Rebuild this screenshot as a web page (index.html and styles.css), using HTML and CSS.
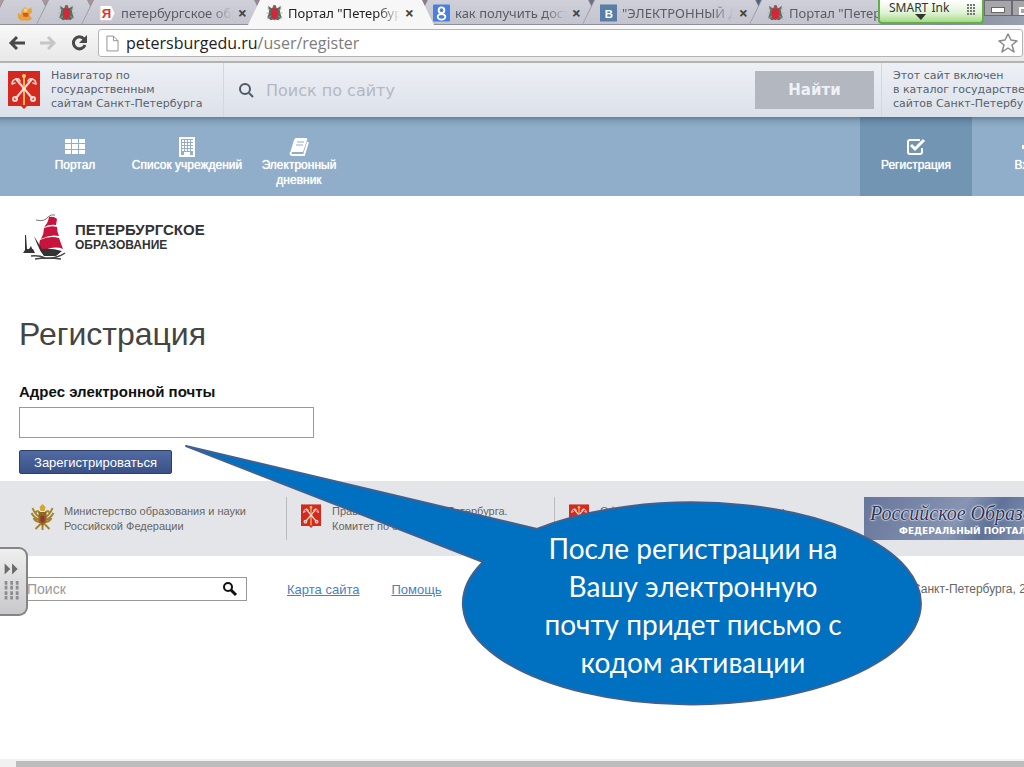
FILE: index.html
```html
<!DOCTYPE html>
<html lang="ru">
<head>
<meta charset="utf-8">
<title>Портал "Петербургское образование"</title>
<link rel="stylesheet" href="styles.css">
</head>
<body>
<svg class="defs" aria-hidden="true">
  <symbol id="crest" viewBox="0 0 32 38">
    <path fill="#d5291f" d="M0 0h32v35H19l-3 3-3-3H0z"/>
    <g fill="none" stroke="#f3d9d2" stroke-width="2" stroke-linecap="round">
      <path d="M8 8 24 27M24 8 8 27"/>
      <path stroke-width="1.500" d="M4 13q0-4 4-5 3-1 4 2M28 13q0-4-4-5-3-1-4 2M4 13l3-1M28 13l-3-1"/>
      <circle cx="7" cy="28" r="2"/><circle cx="25" cy="28" r="2"/>
    </g>
    <path stroke="#f2b655" stroke-width="2" d="M16 6v28"/>
    <circle cx="16" cy="5" r="2" fill="#f5cf6a"/><circle cx="16" cy="18" r="2" fill="#f6e4d8"/>
  </symbol>
  <symbol id="arms" viewBox="0 0 18 20">
    <path fill="#56705c" d="M2 2l4 3 3-4 3 4 4-3-1 7 2 6-4 3-4-1-4 1-4-3 2-6z"/>
    <path fill="#d3263a" d="M5 5h8v9l-4 4-4-4z"/>
    <path stroke="#9aa" stroke-width="1" d="M1 4l3 3M17 4l-3 3M1 17l4-4M17 17l-4-4M0 10h3M18 10h-3"/>
    <circle cx="9" cy="3" r="2" fill="#8b5a53"/>
  </symbol>
</svg>
<div class="screen">
  <div class="tabs">
    <div class="tab tab-small"><svg class="fav" viewBox="0 0 18 18"><path fill="#e8a23c" d="M1 9l3 2 1-5 3-3 4 2 3-2 1 5-3 3 3 4-3 2H4l-3-3z"/><path fill="#d9532f" d="M6 9h6v4H7z"/><circle cx="9" cy="6" r="2" fill="#f4d27a"/></svg></div>
    <div class="tab tab-small"><svg class="fav" viewBox="0 0 18 20"><use href="#arms"/></svg></div>
    <div class="tab"><svg class="fav" viewBox="0 0 18 18"><path fill="#fff" stroke="#d9c9c6" d="M1 1h12l4 8-4 8H1z"/><text x="3" y="14" class="ya">Я</text></svg><span class="tab-title">петербургское обр</span><button class="close" aria-label="Закрыть">×</button></div>
    <div class="tab tab-active"><svg class="fav" viewBox="0 0 18 20"><use href="#arms"/></svg><span class="tab-title">Портал "Петербур</span><button class="close" aria-label="Закрыть">×</button></div>
    <div class="tab"><svg class="fav" viewBox="0 0 18 18"><rect width="18" height="18" rx="1" fill="#4a7fe0"/><g fill="none" stroke="#fff" stroke-width="2"><circle cx="9" cy="6" r="3"/><ellipse cx="9" cy="13" rx="4" ry="3"/></g></svg><span class="tab-title">как получить дост</span><button class="close" aria-label="Закрыть">×</button></div>
    <div class="tab"><svg class="fav" viewBox="0 0 18 18"><rect width="18" height="18" fill="#587ea8"/><text x="5" y="14" class="vk">B</text></svg><span class="tab-title">"ЭЛЕКТРОННЫЙ Д</span><button class="close" aria-label="Закрыть">×</button></div>
    <div class="tab"><svg class="fav" viewBox="0 0 18 20"><use href="#arms"/></svg><span class="tab-title">Портал "Петерб</span></div>
    <div class="win-controls"><button class="win" aria-label="Свернуть"><i class="min"></i></button><button class="win" aria-label="Развернуть"><i class="max"></i></button></div>
    <div class="smart">SMART Ink<svg class="smart-marks" viewBox="0 0 106 23"><path fill="#333" d="M37 14h11l-5 6z"/><path stroke="#777" stroke-width="2" stroke-dasharray="2 1" d="M89 5h9M89 8h9M89 11h9M89 14h9"/></svg></div>
  </div>

  <div class="toolbar">
    <button class="tool" aria-label="Назад"><svg viewBox="0 0 18 18" class="ic18"><path fill="none" stroke="#484848" stroke-width="3" d="M17 9H3M9 3 3 9l6 6"/></svg></button>
    <button class="tool" aria-label="Вперёд"><svg viewBox="0 0 18 18" class="ic18"><path fill="none" stroke="#c6c6c6" stroke-width="3" d="M1 9h14M9 3l6 6-6 6"/></svg></button>
    <button class="tool" aria-label="Обновить"><svg viewBox="0 0 18 18" class="ic18"><path fill="none" stroke="#484848" stroke-width="3" d="M14 5a6 6 0 1 0 1 6"/><path fill="#484848" d="M17 1v8H9z"/></svg></button>
    <div class="omnibox">
      <svg viewBox="0 0 14 18" class="page-ic"><path fill="#fff" stroke="#8c8c8c" d="M1 1h7l5 5v11H1zM8 1v5h5"/></svg>
      <span class="url"><b>petersburgedu.ru</b>/user/register</span>
      <svg viewBox="0 0 20 20" class="star"><path fill="#fff" stroke="#8a8a8a" stroke-width="1.500" stroke-linejoin="round" d="M10 1l3 6 6 1-5 4 2 7-6-4-6 4 2-7-5-4 6-1z"/></svg>
    </div>
  </div>

  <header class="gov">
    <a class="gov-brand" href="#"><svg class="crest" viewBox="0 0 32 38"><use href="#crest"/></svg><span>Навигатор по<br>государственным<br>сайтам Санкт-Петербурга</span></a>
    <form class="gov-search">
      <svg viewBox="0 0 16 16" class="lens"><circle cx="7" cy="7" r="5" fill="none" stroke="#505968" stroke-width="2"/><path stroke="#505968" stroke-width="2" d="M11 11l4 4"/></svg>
      <input type="text" aria-label="Поиск по сайту" placeholder="Поиск по сайту">
      <button type="button">Найти</button>
    </form>
    <div class="gov-note">Этот сайт включен<br>в каталог государственных<br>сайтов Санкт-Петербурга</div>
  </header>

  <nav class="menu">
    <a href="#"><svg viewBox="0 0 20 20"><path fill="#fff" d="M0 2h6v4H0zm7 0h6v4H7zm7 0h6v4h-6zM0 7h6v5H0zm7 0h6v5H7zm7 0h6v5h-6zM0 13h6v4H0zm7 0h6v4H7zm7 0h6v4h-6z"/></svg>Портал</a>
    <a href="#"><svg viewBox="0 0 20 20"><path fill="none" stroke="#fff" stroke-width="2" d="M3 1h14v18H3z"/><path stroke="#fff" stroke-width="2" stroke-dasharray="2 1" d="M5 4h11M5 7h11M5 10h11M5 13h11"/><path fill="#fff" d="M7 15h6v4H7z"/></svg>Список учреждений</a>
    <a href="#"><svg viewBox="0 0 20 20"><path fill="#fff" d="M7 1h10q2 0 1 2l-4 12H2q-1 0 0-2L5 3q1-2 2-2z"/><path fill="none" stroke="#fff" stroke-width="2" d="M19 5l-4 13H3q-2 0-1-3"/><path stroke="#90aec9" d="M8 5h7M7 8h7"/></svg>Электронный<br>дневник</a>
    <div class="menu-user">
      <a href="#" class="current"><svg viewBox="0 0 20 20"><path fill="none" stroke="#fff" stroke-width="2" d="M14 3H4Q2 3 2 5v10q0 2 2 2h10q2 0 2-2v-4"/><path fill="none" stroke="#fff" stroke-width="3" d="M5 8l4 4 9-9"/></svg>Регистрация</a>
      <a href="#"><svg viewBox="0 0 20 20"><path fill="#fff" d="M4 8h6V4l6 6-6 6v-4H4z"/></svg>Вход</a>
    </div>
  </nav>

  <main>
    <a class="logo" href="#">
      <svg viewBox="0 0 48 48" class="ship"><g fill="#c8143c"><path d="M30 4q5-1 8 2l-1 6q-6-1-12 2 4-4 5-10z"/><path d="M25 15q7-3 13-1 0 5 2 9-9-2-18 3 3-5 3-11z"/><path d="M21 27q10-5 19-2l4 11q-9-4-22 3-3-5-1-12z"/></g><path fill="none" stroke="#777" d="M17 7q9 2 12-3 3-3 7-2"/><path fill="#333" d="M15 23l8 13q10-1 20 2l-6 5H25q-5-6-10-20zM6 22h1l1 14h6l2 4H4l2-3zM10 36l2-3 2 5h-4z"/><path fill="none" stroke="#444" stroke-width="1.500" d="M12 43q8-1 14 2 11 1 20-5M16 46q12-2 26 0"/></svg>
      <span class="logo-text"><b>ПЕТЕРБУРГСКОЕ</b><small>ОБРАЗОВАНИЕ</small></span>
    </a>
    <h1>Регистрация</h1>
    <form class="register">
      <label for="email">Адрес электронной почты</label>
      <input id="email" type="email">
      <button type="button">Зарегистрироваться</button>
    </form>
  </main>

  <footer>
    <div class="partners">
      <a href="#" class="partner"><svg viewBox="0 0 24 28" class="eagle"><g fill="none" stroke="#a8832d" stroke-width="2"><path d="M11 14Q5 12 2 4M11 16Q4 15 1 9M10 18q-5 0-7-4M13 14q6-2 9-10M13 16q7-1 10-7M14 18q5 0 7-4M9 8q-3-2-4 1M15 8q3-2 4 1"/><path d="M10 20l-5 5M14 20l5 5M12 20v6"/></g><path fill="#8d6a24" d="M8 8h8v10l-4 4-4-4z"/><path fill="#9c3131" d="M10 12h4v5l-2 2-2-2z"/><path fill="#d3a63a" d="M9 3l3-3 3 3-1 4h-4z"/></svg><span>Министерство образования и науки<br>Российской Федерации</span></a>
      <a href="#" class="partner"><svg viewBox="0 0 32 38" class="crest-s"><use href="#crest"/></svg><span>Правительство Санкт-Петербурга.<br>Комитет по образованию</span></a>
      <a href="#" class="partner"><svg viewBox="0 0 32 38" class="crest-s"><use href="#crest"/></svg><span>Официальный сайт Администрации<br>Санкт-Петербурга</span></a>
      <a href="#" class="banner"><span class="script">Российское Образование</span><span class="caps">ФЕДЕРАЛЬНЫЙ ПОРТАЛ</span></a>
    </div>
    <div class="bottom">
      <form class="find"><input type="text" aria-label="Поиск" placeholder="Поиск"><svg viewBox="0 0 16 16" class="lens"><circle cx="6" cy="6" r="4" fill="none" stroke="#111" stroke-width="2"/><path stroke="#111" stroke-width="3" d="M9 9l5 5"/></svg></form>
      <a href="#">Карта сайта</a>
      <a href="#">Помощь</a>
      <span class="copy">Санкт-Петербурга, 2014</span>
    </div>
  </footer>

  <div class="scroll"><i></i><b></b></div>

  <button class="drawer" aria-label="Открыть панель"><svg viewBox="0 0 28 69"><path fill="#6b6b6b" d="M5 15l6 6-6 6zM13 15l6 6-6 6z"/><g stroke="#8e8e8e" stroke-width="4" stroke-dasharray="3 3"><path d="M5 36h15M5 41h15M5 47h15M5 52h15"/></g></svg></button>

  <div class="callout">
    <svg viewBox="185 445 740 263"><path fill="#0070c0" stroke="#41608f" stroke-width="2" stroke-linejoin="round" d="M186 447 537 530A229 101 0 1 1 483 563Z"/></svg>
    <p>После регистрации на<br>Вашу электронную<br>почту придет письмо с<br>кодом активации</p>
  </div>
</div>
</body>
</html>
```
FILE: styles.css
```css
* { box-sizing: border-box; }
body { margin: 0; background: #fff; font-family: "Liberation Sans", Arial, sans-serif; }
button, input { font: inherit; margin: 0; }
a { color: inherit; text-decoration: none; }
svg { display: block; flex: none; }
.defs { position: absolute; width: 0; height: 0; }
.screen { position: relative; display: flex; flex-direction: column; min-height: 100vh; overflow: hidden; }

/* Browser tabs */
.tabs { position: relative; display: flex; height: 25px; background: linear-gradient(90deg, #b09a9c, #857786 45%, #50608a 75%, #9aa0ac); overflow: hidden; font: 13px/24px "Noto Sans", sans-serif; color: #5b5b62; }
.tab { position: relative; isolation: isolate; display: flex; align-items: center; flex: none; width: 186px; margin-right: -19px; padding: 0 20px 0 18px; gap: 5px; background: #8f8f96; clip-path: polygon(12px 0, calc(100% - 12px) 0, 100% 100%, 0 100%); }
.tab::before { content: ""; position: absolute; z-index: -1; inset: 0 1px 1px; background: linear-gradient(#cfd0d8, #c3c4cd); clip-path: polygon(12px 0, calc(100% - 12px) 0, 100% 100%, 0 100%); }
.tab-small { width: 64px; padding: 0 22px; }
.tab-small:first-child { margin-left: -9px; padding-left: 26px; }
.tab-active { z-index: 2; background: #f7f7f8; color: #222; }
.tab-active::before { background: #f7f7f8; bottom: 0; }
.fav { width: 17px; height: 18px; }
.ya { font: bold 14px "Liberation Sans", sans-serif; fill: #d33; }
.vk { font: bold 12px "Liberation Sans", sans-serif; fill: #fff; }
.tab-title { flex: 1; min-width: 0; overflow: hidden; white-space: nowrap; mask-image: linear-gradient(90deg, #000 80%, transparent); }
.close { border: 0; padding: 0; background: none; color: #444; font: bold 16px/20px "Noto Sans", sans-serif; }
.win-controls { position: absolute; right: 0; top: 0; display: flex; width: 40px; height: 16px; overflow: hidden; background: #9a9aa0; }
.win { flex: none; width: 28px; height: 16px; padding: 6px 6px; border: 1px solid #6a6a72; background: #a5a5aa; }
.min { display: block; height: 6px; border: 1px solid #666; background: #fff; }
.max { display: block; width: 12px; height: 8px; border: 2px solid #fff; }
.smart { position: absolute; right: 40px; top: 0; width: 106px; height: 24px; padding-left: 9px; border: 2px solid #63ad4a; border-top: 0; border-radius: 0 0 4px 4px; background: linear-gradient(#fff, #dff2d3 60%, #a4da85); color: #333; font: 12px/15px "Noto Sans", sans-serif; z-index: 3; }
.smart-marks { position: absolute; left: -2px; top: 0; width: 106px; height: 23px; }

/* Address bar */
.toolbar { display: flex; align-items: center; height: 38px; padding: 0 1px 0 8px; gap: 13px; background: linear-gradient(#f8f8f8, #e8e8e8); border-bottom: 2px solid #b3b3b3; }
.tool { border: 0; padding: 0; background: none; }
.ic18 { width: 18px; height: 18px; }
.omnibox { display: flex; flex: 1; align-items: center; height: 28px; margin-left: -3px; padding: 0 4px 0 7px; gap: 7px; border: 1px solid #b4b4b4; border-radius: 3px; background: #fff; }
.page-ic { width: 13px; height: 17px; }
.url { flex: 1; color: #7d7d7d; font: 16px/24px "Open Sans", "Noto Sans", sans-serif; }
.url b { color: #222; font-weight: normal; }
.star { width: 20px; height: 20px; }

/* City header */
.gov { display: flex; height: 54px; background: linear-gradient(#edf0f5, #dce1e9); color: #56626e; font: 11px/14px "DejaVu Sans", Verdana, sans-serif; overflow: hidden; }
.gov-brand { display: flex; flex: none; align-items: center; width: 223px; padding-left: 8px; gap: 11px; white-space: nowrap; }
.crest { width: 32px; height: 38px; }
.gov-search { display: flex; flex: 1; align-items: center; min-width: 0; padding: 0 7px 0 14px; border: 1px solid #d3d8e0; border-width: 0 1px; }
.lens { width: 16px; height: 16px; }
.gov-search input { flex: 1; min-width: 0; padding: 0 12px; border: 0; outline: 0; background: none; font-size: 16px; }
.gov-search input::placeholder { color: #b3b8c2; opacity: 1; }
.gov-search button { width: 119px; height: 38px; border: 0; background: #b2b7c0; color: #eef1f5; font-size: 15px; font-weight: bold; }
.gov-note { flex: none; width: 142px; padding: 6px 0 0 11px; white-space: nowrap; }

/* Main menu */
.menu { display: flex; height: 79px; padding-left: 19px; background: linear-gradient(#65809a, #829fba 4px, #90aec9 10px); overflow: hidden; color: #fff; font-size: 12px; line-height: 15px; text-align: center; }
.menu a { flex: none; width: 112px; padding-top: 20px; white-space: nowrap; text-shadow: 0 0 1px #fff; }
.menu svg { width: 20px; height: 20px; margin: 0 auto 1px; }
.menu-user { display: flex; margin: 0 -60px 0 auto; }
.menu .current { background: linear-gradient(#506f8c, #6587a6 4px, #7295b4 10px); }

/* Page content */
main { padding: 17px 19px 7px; }
.logo { display: flex; gap: 8px; color: #333; }
.ship { width: 48px; height: 48px; }
.logo-text { padding-top: 9px; }
.logo-text b { display: block; font-size: 15px; line-height: 16px; }
.logo-text small { display: block; font-size: 12px; font-weight: bold; line-height: 14px; }
h1 { margin: 54px 0 29px; color: #444; font-size: 32px; font-weight: normal; line-height: 38px; }
.register { display: flex; flex-direction: column; align-items: flex-start; }
.register label { margin-bottom: 5px; color: #111; font-size: 15px; font-weight: bold; line-height: 20px; }
.register input { width: 295px; height: 31px; margin-bottom: 12px; padding: 0 8px; border: 1px solid #999; background: #fff; }
.register button { width: 153px; height: 24px; padding: 0; border: 1px solid #2c3e6c; border-radius: 2px; background: linear-gradient(#516ba3, #3a5187); color: #fff; font-size: 13px; }

/* Footer */
.partners { display: flex; height: 75px; padding: 16px 0 0 19px; background: #e4e5e8; overflow: hidden; color: #666; font-size: 11px; line-height: 15px; white-space: nowrap; }
.partner { display: flex; flex: none; width: 268px; height: 43px; padding: 7px 0 0 11px; gap: 9px; border-right: 1px solid #bbb; }
.partner + .partner { padding-left: 14px; gap: 11px; }
.partner:nth-child(3) { border: 0; }
.eagle { width: 25px; height: 28px; }
.crest-s { width: 20px; height: 24px; }
.banner { flex: none; width: 210px; height: 43px; margin-left: 41px; padding: 4px 6px; background: linear-gradient(120deg, #66769a, #8794b3 45%, #5f7299 60%, #a9b4cb); overflow: hidden; }
.banner span { display: block; }
.script { color: #2c3558; font: italic 20px/24px "Liberation Serif", serif; text-shadow: 0 0 2px #fff, 0 0 2px #fff, 0 0 1px #fff; }
.caps { padding-left: 29px; color: #fff; font: bold 9px/13px "DejaVu Sans", sans-serif; }
.bottom { display: flex; align-items: center; height: 66px; padding-left: 19px; overflow: hidden; color: #4a7fc0; font-size: 13px; white-space: nowrap; }
.bottom a { margin-right: 32px; text-decoration: underline; }
.find { display: flex; align-items: center; width: 228px; height: 24px; margin-right: 40px; padding: 0 8px 0 7px; border: 1px solid #999; }
.find input { flex: 1; min-width: 0; padding: 0; border: 0; outline: 0; background: none; font-size: 14px; }
.find input::placeholder { color: #999; opacity: 1; }
.copy { width: 112px; margin-left: auto; color: #666; font-size: 12px; }

/* Horizontal scroll bar */
.scroll { display: flex; height: 8px; margin-top: auto; padding-top: 2px; background: #f1f1f1; }
.scroll i { width: 16px; }
.scroll b { flex: 1; background: #bcbcbc; }

/* Overlays */
.drawer { position: absolute; left: 0; top: 547px; width: 28px; height: 69px; padding: 0; border: 2px solid #858585; border-left: 0; border-radius: 0 9px 9px 0; background: linear-gradient(#efefef, #c9c9cc); }
.drawer svg { width: 26px; height: 65px; }
.callout { position: absolute; left: 185px; top: 444px; width: 740px; height: 263px; color: #fff; pointer-events: none; }
.callout svg { width: 740px; height: 263px; }
.callout p { position: absolute; left: 278px; top: 85px; width: 460px; margin: 0; font: 28px/38px Lato, sans-serif; text-align: center; }
```
